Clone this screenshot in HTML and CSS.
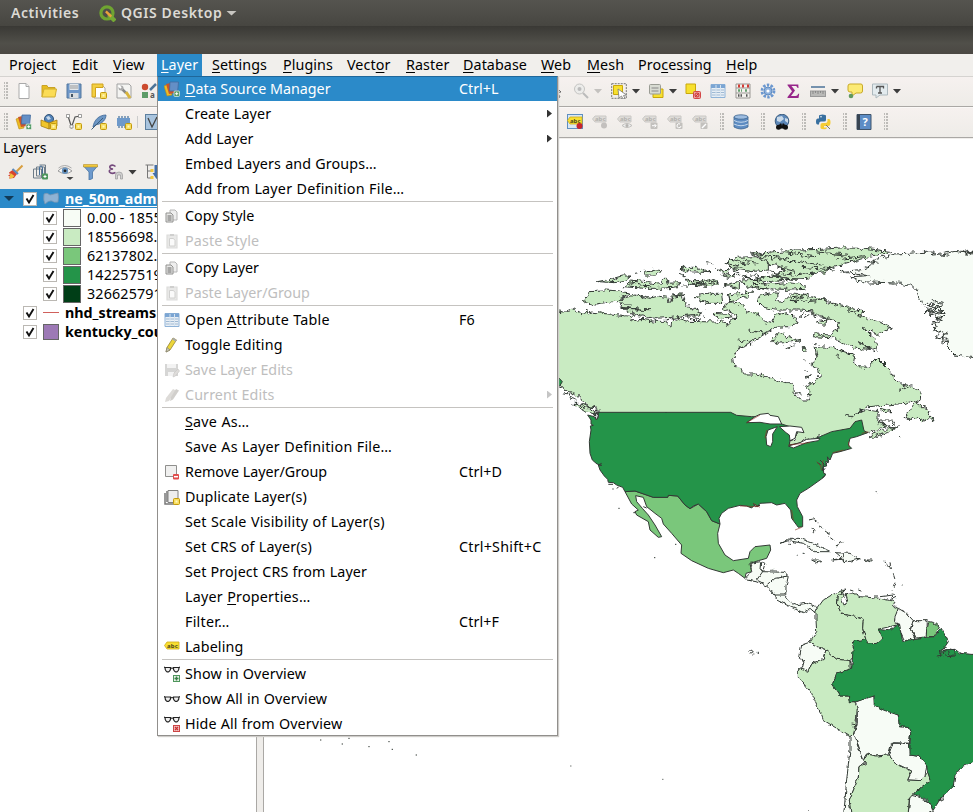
FILE: index.html
```html
<!DOCTYPE html>
<html lang="en">
<head>
<meta charset="utf-8">
<title>QGIS Desktop</title>
<link rel="stylesheet" href="styles.css">
</head>
<body>
<svg class="defs" width="0" height="0">
  <symbol id="new" viewBox="0 0 16 16"><path d="M3 .5h7l3 3v12H3z" fill="#fff" stroke="#aaa"/><path d="M10 .5v3h3" fill="#eee" stroke="#aaa"/></symbol>
  <symbol id="open" viewBox="0 0 16 16"><path d="M1 14V2.500h5l1 2h7V6" fill="#e8bd1e" stroke="#c9a227"/><path d="M1 14 3 6h12.500L14 14z" fill="#fbdc55" stroke="#d1ae30"/></symbol>
  <symbol id="save" viewBox="0 0 16 16"><path d="M1 1h14v14H1z" fill="#6f97c8" stroke="#55789f"/><path d="M3.500 1h9v6h-9z" fill="#e4e8ec"/><path d="M4 3h8M4 5h8" stroke="#999"/><path d="M3.500 10h9v5h-9z" fill="#d8dce0"/><path d="M5 11h2v3H5z" fill="#456"/></symbol>
  <symbol id="star" viewBox="0 0 16 16"><rect x="9.500" y="9.500" width="6" height="6" rx="1" fill="#f7dd60" stroke="#c49a0b"/><rect x="11.500" y="11.500" width="2" height="2" fill="#fff8c0"/></symbol>
  <symbol id="layout" viewBox="0 0 16 16"><path d="M3 3h9l2 2v10H3z" fill="#fff" stroke="#aaa"/><path d="M1 1h11v3.500H4.500v9.500H1z" fill="#f3cf42" stroke="#d1a31c"/><use href="#star"/></symbol>
  <symbol id="wrench" viewBox="0 0 16 16"><path d="M1 1h12l2 2v12H1z" fill="#f4f4f2" stroke="#a2a2a2"/><path d="M4 4 10 10" stroke="#888" stroke-width="2.500"/><path d="m10 9 4 6" stroke="#d9b53d" stroke-width="3"/><circle cx="5" cy="5" r="2.500" fill="#aaa"/><path d="m3 3 2 2" stroke="#fff" stroke-width="2"/></symbol>
  <symbol id="stylemgr" viewBox="0 0 16 16"><circle cx="4" cy="4" r="3.200" fill="#cc4a2e"/><path d="M1 9h6v6H1z" fill="#5d9c68"/><path d="m9 7 6-6" stroke="#4d7498" stroke-width="2.500"/><text x="9" y="15" class="glyph">a</text></symbol>
  <symbol id="datasrc" viewBox="0 0 16 16"><path d="m0 5 5-2 3 11-5 1z" fill="#edbb24" stroke="#b98d16" stroke-width=".6"/><path d="m2 3 5-1 4 10-6 1z" fill="#c9552d"/><path d="M6 1h8.500l-.8 9H5.500z" fill="#648fc6" stroke="#426b9e" stroke-width=".8"/><rect x="10" y="10" width="5.500" height="5.500" rx="1" fill="#539965" stroke="#e8f4e8" stroke-width=".7"/><path d="M12.700 11.200v3M11.200 12.700h3" stroke="#fff"/></symbol>
  <symbol id="geopkg" viewBox="0 0 16 16"><circle cx="8" cy="5" r="4.500" fill="#5382b8" stroke="#355577"/><path d="m5 3 3-1 2 3-3 1z" fill="#c6d8ea"/><path d="m0 6 8 3 8-3v6l-8 3-8-3z" fill="#f0c52c" stroke="#a37b13" stroke-width=".8"/><path d="M8 9v6" stroke="#a37b13"/><use href="#star"/></symbol>
  <symbol id="vector" viewBox="0 0 16 16"><path d="m2 2 3.500 11L9 3l5-1" fill="none" stroke="#555" stroke-width="1.200"/><path d="M.5.5h3v3h-3zM4 11h3v3H4zM12.500.5h3v3h-3z" fill="#fff" stroke="#777" stroke-width=".7"/><use href="#star"/></symbol>
  <symbol id="feather" viewBox="0 0 16 16"><path d="M2 13C3 6 8 1 15 1c0 4-3 9-11 10z" fill="#6c96c4" stroke="#3c6697" stroke-width=".8"/><path d="M.5 15.500 12 4" stroke="#3c5d7b"/><use href="#star"/></symbol>
  <symbol id="memory" viewBox="0 0 16 16"><path d="M3 2v12M6 2v12M9 2v12M12 2v12" stroke="#50779f" stroke-width="1.300"/><path d="M1 4h13v8H1z" fill="#6e99ca"/><use href="#star"/></symbol>
  <symbol id="virt" viewBox="0 0 16 16"><rect x=".5" y=".5" width="15" height="15" fill="#a9c4de" stroke="#5d7f9f"/><path d="m3 4 4 9 5-10" fill="none" stroke="#444" stroke-width="1.300"/></symbol>
  <symbol id="cursor" viewBox="0 0 16 16"><path d="m5 1 8 8-3.500.5L12 14l-2 1-2-4.500L5 13z" fill="#fff" stroke="#666"/></symbol>
  <symbol id="mag" viewBox="0 0 16 16"><circle cx="6.500" cy="6" r="5" fill="#ececea" stroke="#c4c4c2"/><circle cx="6.500" cy="6" r="2" fill="#bbb"/><path d="m10 10 5 5" stroke="#bbb" stroke-width="2"/></symbol>
  <symbol id="select" viewBox="0 0 16 16"><path d="M.7.700h14.600v14.600H.7z" fill="none" stroke="#777" stroke-dasharray="2 1"/><path d="M2.500 2.500h9v9h-9z" fill="#f7e02e" stroke="#c9a70c"/><path d="m7 6 8.500 6-3 .5 1.500 3-2 .5-1.500-3-2.500 2z" fill="#fff" stroke="#777" stroke-width=".8"/></symbol>
  <symbol id="selform" viewBox="0 0 16 16"><path d="M5 6h10v8.500H5z" fill="#f7e02e" stroke="#c9a70c"/><rect x="1.500" y="1.500" width="11" height="9.500" rx="1" fill="#d8dbd2" stroke="#9a9c94"/><path d="M3.500 5h7M3.500 8h7" stroke="#888" stroke-width="1.200"/></symbol>
  <symbol id="desel" viewBox="0 0 16 16"><path d="M1 1h9.500v9.500H1z" fill="#f7e02e" stroke="#c9a70c"/><rect x="8.500" y="8.500" width="7" height="7" rx="1" fill="#e9a19c" stroke="#d34747"/><circle cx="12" cy="12" r="2" fill="none" stroke="#cf3434"/><path d="m10 14 4-4" stroke="#cf3434"/></symbol>
  <symbol id="table" viewBox="0 0 16 16"><path d="M1 1.500h14v13H1z" fill="#e9eff5" stroke="#8fb3d8"/><path d="M1 1.500h14V5H1z" fill="#7ba5d3"/><path d="M2 7h12M2 9.500h12M2 12h12" stroke="#9fb9d3"/><path d="M6 2v12M10.500 2v12" stroke="#d7e4f0"/></symbol>
  <symbol id="abacus" viewBox="0 0 16 16"><path d="M1 1h14v14H1zM1 5h14M1 10h14" fill="#f4f2ee" stroke="#9a9794"/><path d="M3 3h2m2 0h2m3 0h2" stroke="#d33c35" stroke-width="3"/><path d="M3 7.500h4m3 0h3" stroke="#65a070" stroke-width="2.500" stroke-dasharray="2 1"/><path d="M3 12.500h5m3 0h2" stroke="#555" stroke-width="2.500" stroke-dasharray="1.500 1"/></symbol>
  <symbol id="gear" viewBox="0 0 16 16"><circle cx="8" cy="8" r="6" fill="none" stroke="#6b97cf" stroke-width="2.800" stroke-dasharray="2.400 1.370"/><circle cx="8" cy="8" r="4" fill="#8eb1dd" stroke="#5f8cc2"/><circle cx="8" cy="8" r="1.600" fill="#fff"/></symbol>
  <symbol id="sigma" viewBox="0 0 16 16"><path d="M2.500 1.500h10.800l.2 3.500h-1c-.4-1.500-1-2-2.500-2H6.500L10 7.500 6 13h4.500c1.500 0 2-.7 2.700-2.200h1l-.7 4.200h-11v-1L7 8.300l-4.500-6z" fill="#97268a"/></symbol>
  <symbol id="ruler" viewBox="0 0 16 16"><path d="M1 4h14" stroke="#4b7299" stroke-width="1.500"/><rect x=".5" y="8" width="15" height="5.500" fill="#b9b9b7" stroke="#999"/><path d="M3 8v3m2.500-3v2M8 8v3m2.500-3v2M13 8v3" stroke="#777" stroke-width=".7"/></symbol>
  <symbol id="tip" viewBox="0 0 16 16"><path d="M3 1h11q1.500 0 1.500 2v5q0 2-2 2H9l-4 3V9H3Q1 9 1 7V3q0-2 2-2z" fill="#fcea74" stroke="#c9aa28"/><circle cx="4" cy="13" r="2.300" fill="#60985e"/></symbol>
  <symbol id="annot" viewBox="0 0 16 16"><path d="M.5 1h15v11H8l-4 3v-3H.5z" fill="#e3ebee" stroke="#adb9be"/><path d="M4.500 3.500h7v2M8 3.500v7M6 10h4M4.500 3.500v2" fill="none" stroke="#555" stroke-width="1.300"/></symbol>
  <symbol id="tag" viewBox="0 0 16 16"><path d="M3 3h12v7H3L.5 6.500z" fill="#f8df32" stroke="#cfab18" stroke-width=".8"/><text x="3" y="8.700" class="abc">abc</text></symbol>
  <symbol id="tagon" viewBox="0 0 16 16"><rect x=".5" y=".5" width="15" height="14" fill="#d9e7f3" stroke="#5f8fc1"/><use href="#tag"/><circle cx="12.500" cy="12" r="3" fill="#c8242c"/></symbol>
  <symbol id="taggray" viewBox="0 0 16 16"><path d="M3 2h11v6H3L.5 5z" fill="#dedcd9" stroke="#cac8c5"/><text x="3" y="7.200" class="abc dim">abc</text></symbol>
  <symbol id="gdot" viewBox="0 0 16 16"><use href="#taggray"/><circle cx="12" cy="11.500" r="3" fill="#c3c0be"/></symbol>
  <symbol id="geye" viewBox="0 0 16 16"><use href="#taggray"/><path d="M5 11.500q5-4 10 0-5 4-10 0z" fill="#eee" stroke="#c0bebb"/><circle cx="10" cy="11.500" r="1.500" fill="#b5b3b0"/></symbol>
  <symbol id="gmove" viewBox="0 0 16 16"><use href="#taggray"/><rect x="8.500" y="8.500" width="7" height="6.500" rx="1" fill="#c3c1be"/><path d="M10 11.700h4m-1.500-1.700 1.700 1.700-1.700 1.700" fill="none" stroke="#fff"/></symbol>
  <symbol id="grot" viewBox="0 0 16 16"><use href="#taggray"/><rect x="8.500" y="8.500" width="7" height="6.500" rx="1" fill="#c3c1be"/><path d="M14 12a2 2 0 1 1-1-2" fill="none" stroke="#fff"/></symbol>
  <symbol id="gedit" viewBox="0 0 16 16"><use href="#taggray"/><rect x="8.500" y="8.500" width="7" height="6.500" rx="1" fill="#c3c1be"/><path d="m10 14 4-4" stroke="#fff" stroke-width="1.500"/></symbol>
  <symbol id="db" viewBox="0 0 16 16"><path d="M1 3v10q7 4 14 0V3z" fill="#5e8cc2" stroke="#3e658f" stroke-width=".8"/><ellipse cx="8" cy="3" rx="7" ry="2.200" fill="#9dbce0" stroke="#3e658f" stroke-width=".8"/><path d="M1 6.500q7 3.500 14 0M1 10q7 3.500 14 0" fill="none" stroke="#c5d8ec"/></symbol>
  <symbol id="globe" viewBox="0 0 16 16"><circle cx="8" cy="7" r="6.800" fill="#5c87b8" stroke="#3f5f80"/><path d="m3 3 5-1 2 3-4 3-3-1zm8 1 3 1v4l-3-2z" fill="#c9d9e9"/><path d="M3 14.500 6 9.500h1.500L8 12l.5-2.500H10l3 5" fill="#111"/><circle cx="4.500" cy="13.300" r="2.500" fill="#111"/><circle cx="11.500" cy="13.300" r="2.500" fill="#111"/></symbol>
  <symbol id="python" viewBox="0 0 16 16"><path d="M4 5V2q0-1.500 3.500-1.500T11 2v4q0 1.500-2 1.500H6q-2 0-2 3H2.500Q1 10.500 1 7.500T3 4.500h5" fill="#386f9f"/><path d="M5.500 14v-3q0-2 2-2h3q2 0 2-2V5H14q1.500 0 1.500 3.500T13 12H9v1.500h3q0 1.800-3 1.800t-3.500-1.300" fill="#f5cc35"/><circle cx="6" cy="2.700" r=".8" fill="#fff"/><path d="m11 11 4 4" stroke="#777"/></symbol>
  <symbol id="help" viewBox="0 0 16 16"><path d="M1 .5h14v15H1z" fill="#5d8cc5" stroke="#40546b"/><path d="M1 .5h3v15H1z" fill="#384452"/><text x="6.500" y="12" class="q">?</text></symbol>
  <symbol id="brush" viewBox="0 0 16 16"><path d="m15 1.500-6 6" stroke="#d89e3e" stroke-width="2"/><path d="m5 6 4.500 4-3 4-5 .5 1-2-2-1 2-1-1-2z" fill="#d8442e"/><path d="m3 9 4 3-2 2-3 .5z" fill="#efc13c"/><path d="m5 5 5.500 5" stroke="#5b88ba" stroke-width="2"/></symbol>
  <symbol id="group" viewBox="0 0 16 16"><path d="M1 5h8v9H1zM4 3h8v9H4zM7 1h6v10" fill="none" stroke="#6e7c88"/><path d="M7 11V4q0-2 1.500-2T10 4v6" fill="none" stroke="#456d96"/><rect x="9.500" y="9.500" width="6" height="6" rx="1" fill="#4e965c"/><path d="M12.500 11v3M11 12.500h3" stroke="#fff"/></symbol>
  <symbol id="eye" viewBox="0 0 16 16"><path d="M.5 7q6-7 14 0Q8 12 .5 7z" fill="#fff" stroke="#999"/><circle cx="7.500" cy="6.800" r="3.200" fill="#6894c0"/><circle cx="7.500" cy="6.800" r="1.400" fill="#222"/><path d="M1 4q6-5 13 0" fill="none" stroke="#aaa"/><path d="M9 13h7l-3.500 3z" fill="#444"/></symbol>
  <symbol id="funnel" viewBox="0 0 16 16"><path d="M1 2h14l-5 6v6.500L6.500 16V8z" fill="#6d9acd" stroke="#4774a2" stroke-width=".8"/><path d="M1 .5h14V3H1z" fill="#f0c93c" stroke="#b7902c" stroke-width=".6"/></symbol>
  <symbol id="eps" viewBox="0 0 16 16"><path d="M8 2.500Q5 0 2.500 2.200 1.500 4.500 5.500 5 1 5.500 2 8q2 2.500 6 .5" fill="none" stroke="#754b7d" stroke-width="1.600"/><path d="M8 15v-4q0-3 3.500-3t3.500 3v4h-2v-4h-3v4z" fill="#d0d0d0" stroke="#999" stroke-width=".7"/></symbol>
  <symbol id="expand" viewBox="0 0 16 16"><path d="M1 1h8M3 1v13h4M3 7h4" fill="none" stroke="#777"/><path d="M6 5h3v3H6zM6 12h3v3H6z" fill="#f2c83b"/><path d="M10 1h4v8h2l-4 6-4-6h2z" fill="#426fa8"/></symbol>
  <symbol id="copy" viewBox="0 0 16 16"><path d="M6 2h5l2 2v8H6z" fill="#eee" stroke="#b6b6b6"/><path d="M2 5h5l2 2v7H2z" fill="#e6e6e5" stroke="#929290"/><path d="M3.500 8h4M3.500 10h4M3.500 12h4" stroke="#666" stroke-width="1.200"/></symbol>
  <symbol id="paste" viewBox="0 0 16 16"><path d="M3 2h10v13H3z" fill="#e8e8e7" stroke="#dcdcdb" stroke-width="1.200"/><path d="M5.500 5.500h4l1.500 2V13H5.500z" fill="#fafafa" stroke="#d0d0cf"/><path d="M6 1h4v2H6z" fill="#cfcfce"/></symbol>
  <symbol id="pencil" viewBox="0 0 16 16"><path d="m2 15 1-4.500L9 1l3.500 2L6 13z" fill="#ecd63a" stroke="#958434" stroke-width=".8"/><path d="m8.500 1.500 3.800 2.300" stroke="#aaa" stroke-width="2"/><path d="m2 15 1-4.500L6 13z" fill="#ccc9b0" stroke="#777" stroke-width=".6"/></symbol>
  <symbol id="savegray" viewBox="0 0 16 16"><path d="M1 2h13v12H1z" fill="#d6d6d5"/><path d="M3 2h9v4H3zM4 10h6v4H4z" fill="#f3f3f3"/><path d="m9 15 1-4 4-4 1.500 2-4 5z" fill="#dedcda" stroke="#c8c6c5" stroke-width=".6"/></symbol>
  <symbol id="editsgray" viewBox="0 0 16 16"><path d="m1 15 1-4L9 2l3 1.500L5 14z" fill="#dddbd8"/><path d="m6 14 1-4 5-8 3 1.500-6 9z" fill="#d1cfcc"/></symbol>
  <symbol id="remove" viewBox="0 0 16 16"><path d="M1.500 1.500h11v11h-11z" fill="#f0f0ef" stroke="#8f8f8d"/><rect x="9" y="10" width="6" height="5.500" rx="1" fill="#e04c4c"/><path d="M10 12.700h4" stroke="#fff" stroke-width="1.500"/></symbol>
  <symbol id="dup" viewBox="0 0 16 16"><path d="M1 4v11h10M3 2v11" fill="none" stroke="#777" stroke-width="1.500"/><path d="M4 1.500h10v12H4z" fill="#eee" stroke="#828280"/><use href="#star"/></symbol>
  <symbol id="glasses" viewBox="0 0 16 16"><g fill="#eee" stroke="#222" stroke-width="1.200"><path d="M1 6h5.500v2Q5 11.500 2.500 10 1 9 1 6z"/><path d="M9.500 6H15q0 3-1.500 4-2.500 1.500-4-2zM6.500 7q1.500-1 3 0M1 6 0 5.500M15 6l1-.5"/></g></symbol>
  <symbol id="showov" viewBox="0 0 16 16"><use href="#glasses" y="-4.500"/><rect x="9.500" y="9.500" width="6" height="6" fill="#e9f3e9" stroke="#4e965c"/><path d="M12.500 10.500v4m-2-2h4" stroke="#3c8049" stroke-width="1.500"/></symbol>
  <symbol id="hideov" viewBox="0 0 16 16"><use href="#glasses" y="-4.500"/><rect x="9.500" y="9.500" width="6" height="6" fill="#f1bcbc" stroke="#cc4545"/><path d="m11 11 3 3m0-3-3 3" stroke="#c33" stroke-width="1.200"/></symbol>
  <symbol id="poly" viewBox="0 0 16 16"><path d="M1 3q3-2 6 1 4-1 8-2 1 4 0 9-4 1-6-1-3-1-7 3Q0 9 1 3z" fill="#8fb3d4" stroke="#7796b2" stroke-width=".8"/></symbol>
  <symbol id="check" viewBox="0 0 12 12"><path d="m2.500 5.500 2.500 4L9.500 2" fill="none" stroke="#111" stroke-width="1.900"/></symbol>
  <symbol id="qgis" viewBox="0 0 16 16"><circle cx="7.500" cy="7.500" r="5.700" fill="none" stroke="#6fa431" stroke-width="3"/><path d="m9 9 6 6" stroke="#75a935" stroke-width="4"/><path d="m6.500 6 5 5" stroke="#eba23b" stroke-width="2.300"/></symbol>
</svg>

<header class="shell"><span class="activities">Activities</span><svg class="logo"><use href="#qgis"/></svg><span class="app">QGIS Desktop</span><i class="caret light"></i></header>
<div class="titlebar"></div>
<nav class="menubar">
  <span class="m1">Pro<u>j</u>ect</span><span class="m2"><u>E</u>dit</span><span class="m3"><u>V</u>iew</span><span class="m4 active"><u>L</u>ayer</span><span class="m5"><u>S</u>ettings</span><span class="m6"><u>P</u>lugins</span><span class="m7">Vect<u>o</u>r</span><span class="m8"><u>R</u>aster</span><span class="m9"><u>D</u>atabase</span><span class="m10"><u>W</u>eb</span><span class="m11"><u>M</u>esh</span><span class="m12">Pro<u>c</u>essing</span><span class="m13"><u>H</u>elp</span>
</nav>
<div class="toolbar">
  <b class="grip first"></b>
  <svg><use href="#new"/></svg><svg><use href="#open"/></svg><svg><use href="#save"/></svg><svg><use href="#layout"/></svg><svg><use href="#wrench"/></svg><svg><use href="#stylemgr"/></svg>
  <div class="right one"><svg><use href="#cursor"/></svg><svg><use href="#mag"/></svg><i class="caret faint"></i><svg><use href="#select"/></svg><i class="caret"></i><svg><use href="#selform"/></svg><i class="caret"></i><svg><use href="#desel"/></svg><svg><use href="#table"/></svg><svg><use href="#abacus"/></svg><svg><use href="#gear"/></svg><svg><use href="#sigma"/></svg><svg><use href="#ruler"/></svg><i class="caret"></i><svg><use href="#tip"/></svg><svg><use href="#annot"/></svg><i class="caret"></i></div>
</div>
<div class="toolbar second">
  <b class="grip first"></b>
  <svg><use href="#datasrc"/></svg><svg><use href="#geopkg"/></svg><svg><use href="#vector"/></svg><svg><use href="#feather"/></svg><svg><use href="#memory"/></svg><b class="rule"></b><svg><use href="#virt"/></svg>
  <div class="right two"><svg><use href="#tagon"/></svg><svg><use href="#gdot"/></svg><svg><use href="#geye"/></svg><svg><use href="#gmove"/></svg><svg><use href="#grot"/></svg><svg><use href="#gedit"/></svg><b class="grip"></b><svg><use href="#db"/></svg><b class="grip"></b><svg><use href="#globe"/></svg><b class="grip"></b><svg><use href="#python"/></svg><b class="grip"></b><svg><use href="#help"/></svg><b class="grip"></b></div>
</div>
<main class="work">
  <aside class="layers">
    <div class="title">Layers</div>
    <div class="tools"><svg><use href="#brush"/></svg><svg><use href="#group"/></svg><svg><use href="#eye"/></svg><svg><use href="#funnel"/></svg><svg><use href="#eps"/></svg><i class="caret"></i><svg><use href="#expand"/></svg></div>
    <div class="tree">
      <div class="row sel"><i class="twist"></i><svg class="box"><use href="#check"/></svg><svg class="kind"><use href="#poly"/></svg><span class="name"><u>ne_50m_admin</u></span></div>
      <div class="row child"><svg class="box"><use href="#check"/></svg><i class="sw c1"></i><span>0.00 - 18556698</span></div>
      <div class="row child"><svg class="box"><use href="#check"/></svg><i class="sw c2"></i><span>18556698.00</span></div>
      <div class="row child"><svg class="box"><use href="#check"/></svg><i class="sw c3"></i><span>62137802.00</span></div>
      <div class="row child"><svg class="box"><use href="#check"/></svg><i class="sw c4"></i><span>142257519.00</span></div>
      <div class="row child"><svg class="box"><use href="#check"/></svg><i class="sw c5"></i><span>326625791.00</span></div>
      <div class="row top"><svg class="box"><use href="#check"/></svg><i class="line"></i><span class="name">nhd_streams</span></div>
      <div class="row top"><svg class="box"><use href="#check"/></svg><i class="sw c6"></i><span class="name">kentucky_counties</span></div>
    </div>
  </aside>
  <div class="splitter"></div>
  <section class="canvas">
    <svg class="map" viewBox="-873 -303 2127 2019">
      <filter id="coast" x="-5%" y="-5%" width="110%" height="110%"><feTurbulence type="fractalNoise" baseFrequency=".07" numOctaves="2" seed="4"/><feDisplacementMap in="SourceGraphic" scale="22" xChannelSelector="R" yChannelSelector="G"/></filter>
      <filter id="shore" x="-5%" y="-5%" width="110%" height="110%"><feTurbulence type="fractalNoise" baseFrequency=".07" numOctaves="2" seed="9"/><feDisplacementMap in="SourceGraphic" scale="12" xChannelSelector="R" yChannelSelector="G"/></filter>
      <g class="land" filter="url(#coast)">
        <path class="l" d="M-60 213H10L30 216 48 212 58 206 66 212 85 222 94 212 100 222 108 216 165 222 235 230 230 243 262 238 300 244 330 244 340 254 348 262 350 244 375 236 400 244 480 246 500 240 515 256 525 240 540 238 548 225 520 215 508 205 515 190 535 185 560 195 575 212 600 222 615 228 630 245 650 250 660 225 700 218 725 235 720 255 700 260 660 262 600 298 585 312 550 325 533 355 535 375 545 378 560 385 565 402 600 402 640 412 680 425 712 430 715 455 735 480 760 480 765 455 750 440 770 430 795 410 790 385 770 375 785 350 780 320 830 322 870 335 900 345 895 370 910 380 940 382 967 352 1000 385 1015 410 1040 432 1075 440 1095 455 1092 478 1050 490 1000 495 940 500 900 520 940 510 970 515 968 545 995 560 935 580 890 570 750 600 710 622 700 610 718 600 725 580 700 565 675 550 580 545 527 527 130 527 128 505 100 500 80 480 60 460 30 452 10 430-60 400z"/>
        <path class="l" d="M605 185 615 165 650 158 675 160 660 175 680 190 710 162 750 165 800 180 845 195 900 205 930 215 915 225 940 235 980 248 1012 262 985 275 970 285 925 265 945 285 965 300 968 320 950 330 910 305 945 328 900 325 860 305 830 293 775 290 780 282 830 285 840 270 855 250 830 240 800 228 765 212 730 210 660 210 620 200z"/>
        <path class="l" d="M590 42 660 35 720 30 800 28 860 24 930 25 1013 35 950 48 900 62 840 78 810 95 770 100 760 115 710 118 660 105 690 90 660 75 620 70 590 62 620 52z"/>
        <path class="l" d="M590 130 640 132 700 128 750 135 753 145 690 148 610 145zM560 110 600 118 650 105 700 120 640 125zM510 70 545 52 600 50 640 65 640 90 590 95 530 85zM555 120 620 118 640 150 580 140zM520 165 595 155 575 170 525 185zM375 82 420 82 468 98 400 95zM392 120 430 128 470 118 492 130 470 140 405 135zM420 170 470 160 500 160 503 190 450 190zM480 90 525 92 515 100zM500 105 550 103 520 112zM505 135 550 125 550 145zM475 220 510 222 535 230 490 236z"/>
        <path class="l" d="M130 125 165 118 200 108 228 108 215 120 180 128zM205 140 230 120 270 125 290 130 315 132 320 115 335 115 340 130 375 128 370 140 320 145 270 145zM265 95 290 88 320 92 300 105 270 105zM85 185 105 152 145 150 185 152 228 160 190 178 160 190 120 195zM185 180 240 165 285 175 310 168 335 172 345 188 355 168 380 165 395 200 440 215 430 228 380 228 350 232 300 235 240 225 200 205 280 210 200 202zM355 162 390 162 375 168zM50 490 70 490 100 500 128 525 90 515z"/>
        <path class="l" d="M650 305 670 275 690 285 735 303 710 305 670 310zM690 322 715 318 705 326zM785 245 815 240 810 252 790 252zM1050 535 1085 483 1090 500 1110 500 1125 510 1122 525 1138 540 1120 536 1100 545 1090 535zM940 590 965 575 1030 560 1000 578 950 592zM975 505 1010 512 985 515zM742 325l12 0-3 9-9-2z"/>
        <path class="n" d="M1020 42 1090 38 1130 36 1135 45 1160 42 1200 34 1230 38 1280 35V355L1230 350 1200 345 1175 320 1180 300 1155 290 1175 280 1140 270 1150 260 1130 250 1165 240 1125 225 1170 215 1110 215 1160 200 1120 200 1140 190 1100 190 1090 160 1070 138 1040 130 1000 128 920 125 890 110 940 107 852 95 930 88 950 72 970 70 940 65z"/>
        <path class="ink" d="M520 58 570 72M510 70 550 78M530 82 570 80M560 63 610 70M610 48 690 58M650 45 720 65M690 38 780 50M700 60 800 75M660 80 720 94M740 82 840 90M720 105 790 98M780 35 880 46M840 60 930 50M640 95 710 105M610 110 680 108M660 112 740 118M215 130 240 128 220 137M245 133 290 139M400 122 455 133 410 133M460 125 485 132M195 192 230 192M210 208 285 212M580 270 635 282M545 300 590 306M380 228 440 220M335 240 375 230M405 235 435 240M630 40 605 43M700 175 760 165 710 182 760 180M760 185 820 178M820 180 845 200M870 200 880 210 890 203 900 218 910 205 930 225M880 215 920 230M910 310 945 325M725 240 760 213 790 230 830 235M750 230 760 223M770 220 780 235M1030 452 1075 437M975 540 1010 540 1020 555 990 560zM965 550 1020 565M870 525 890 530 930 505M1130 180 1165 190 1150 205 1170 225 1140 235 1165 242M1130 250 1145 260 1135 275 1155 270 1145 295 1165 285 1160 310 1180 295M1110 200 1130 220 1150 195M1160 42 1180 46M1220 30 1254 38M1215 36 1254 42M10 440 35 450 25 460 50 462 45 474 65 480M60 488 90 505 115 500 128 520 110 520 130 535M240 100 252 98M370 103 390 108M455 68 472 72M385 138 400 138M430 180 460 185M585 105 605 106M510 250 520 257M450 205l4 3M448 225l5 3M530 88 550 95M750 410 765 408 752 415zM720 455 740 465M845 345 852 352M965 330 970 336M745 362l5 2M748 392l4 3M775 310l14 2"/>
      </g>
      <g class="land">
        <path class="d" d="M-60 385 10 412 22 425 14 438-60 410z"/>
        <path class="m" d="M210 755 240 753 295 772H338L340 766 368 768 390 795 405 806 430 792 455 815 470 842 495 852 488 880 490 910 510 945 535 962 580 955 585 935 600 920 645 915 647 930 635 955 610 962 585 970 590 995 573 1000 570 1015 550 1000 535 990 505 998 460 985 410 962 378 940 380 915 350 880 325 852 320 835 300 820 275 800 265 772 242 767 245 785 262 805 280 825 300 855 320 890 310 892 285 870 280 845 245 825 240 815 250 810 230 792z"/>
        <path class="d" d="M130 517H527L545 526 590 530 635 530 680 552 720 565 705 600 703 615 755 605 795 590 830 575 885 565 900 545 920 540 927 572 938 578 905 590 885 595 880 615 890 625 855 635 833 640 825 660 818 652 820 668 812 664 815 678 805 680 806 700 812 702 806 712 795 720 760 745 735 760 725 780 727 800 743 830 743 860 730 862 710 835 707 810 690 790 665 795 650 788 615 790 608 800 600 794 590 804 575 798 555 796 520 805 500 820 492 835 495 852 470 842 455 815 430 792 415 798 405 806 390 795 368 768 340 766 338 772H295L240 753 210 755 203 742 185 735 175 728 160 727 158 718 148 708 135 690 130 675 140 676 126 672 112 660 105 640 103 605 108 570 106 558 115 556 108 552 108 540 98 525 118 530 124 540 130 532z"/>
        <g transform="translate(555 510)">
          <path class="w" d="M20 38 45 20 60 13 85 10 90 16 115 20 125 42 90 42 60 37zM80 105 78 80 84 60 112 50 98 72 98 95 92 110zM118 50 150 48 185 52 192 68 170 65 165 85 150 92 148 75 138 68zM145 108 180 98 200 88 240 85 235 92 200 98 160 114z"/>
        </g>
        <g transform="translate(555 510)" filter="url(#shore)">
          <path class="n" d="M15 505 35 485 30 460 62 455 60 478 68 485 135 487 145 498 138 530 137 560 145 570 165 585 200 580 230 590 225 608 210 595 190 608 150 590 110 570 105 555 80 528 60 520 48 515 20 510zM120 400 150 385 180 385 220 400 272 425 225 425 190 400 145 392zM275 450 305 445 285 428 330 430 358 447 312 458 308 448zM215 450 235 450 245 455 230 458zM375 450 400 450 395 457z"/>
          <path class="ink" d="M62 455 75 460 68 485 50 510 70 520M80 528 105 505 145 498M105 555H135M310 430 310 455M205 330 220 327 232 335M215 355l10 5-3 10M240 345l5 10M255 360 270 370M290 410 300 395 310 400M170 435h4M188 430h6M410 248h3M480 80h3M435 455l5 12 10 3M450 460l5 20M460 490l5 15M465 515l-5 15M485 525h3M402 558h12M420 560l40-5-8 15 16-8M455 540h3M330 540l10 3M355 540l8 3M265 378l15 12M145 403h8M95 480l10-2"/>
        </g>
        <g transform="translate(555 510)">
          <path class="ink" d="M247 203l10-8M240 150l12 12-6 20 10-6M262 140l4 14-10 10M232 158l10 6M40 280l6 10 14-4"/>
          <path class="red" d="M230 155 240 165 245 180M250 150 245 170M0 288 55 290M165 360 185 352M155 300 160 330M385 65 365 70M325 95 328 112M310 120 278 128M40 280 60 292M20 38 60 15M80 60 75 85M145 105 210 98"/>
        </g>
        <g transform="translate(555 1050)" filter="url(#shore)">
          <path class="l" d="M228 60 250 30 275 15 310 0 295 20 292 45 305 72 340 78 370 88 368 115 378 150 340 155 340 200 330 212 290 208 255 178 230 170 208 157 230 125 228 90z"/>
          <path class="l" d="M318-4 308 8 312 18 305 30 312 45 322 38 315 12 335 8 360 20 420 25 465 35 460 50 475 55 465 90 470 105 415 118 428 145 410 160 385 162 378 150 368 115 370 88 340 78 305 72 292 45 295 20z"/>
          <path class="n" d="M475 55 500 70 520 92 512 115 525 145 495 157 480 125 478 102 463 98 465 80zM520 92 562 92 560 140 525 145 512 115zM208 157 235 170 258 180 250 205 215 222 205 245 185 238 192 212 178 205 185 165z"/>
          <path class="m" d="M566 95 580 97 598 112 582 140 558 140 560 120z"/>
          <path class="l" d="M175 235 205 245 215 222 250 205 258 180 290 208 330 212 335 235 290 250 278 285 300 318 325 318 328 335 345 335 352 355 348 400 340 435 330 440 250 390 240 365 215 310 175 262z"/>
          <path class="n" d="M345 335 402 318 403 345 475 375 478 410 505 412 512 430 508 460 460 458 445 495 410 498 380 492 370 508 355 470 342 430 352 400 352 355zM445 495 455 460 508 460 512 495 540 500 560 525 555 560 545 572 503 570 515 543 470 522zM330 440 342 430 370 508 375 515 357 530 355 565 328 630 335 690H310L320 570 330 480zM510 615 540 622 572 640 580 665 503 690z"/>
          <path class="l" d="M370 508 380 492 410 498 445 495 470 522 515 543 503 570 545 572 565 548 570 570 520 612 508 625 503 690H335L328 630 355 565 357 530 377 520z"/>
          <path class="d" d="M478 102 482 125 488 155 525 145 582 140 604 115 625 155 615 170 600 188 620 176 648 180 660 190 720 195V510L665 530 645 555 640 590 605 620 580 660 572 640 550 622 520 612 540 595 570 570 562 545 560 525 540 500 510 495 510 465 512 430 505 412 478 410 475 375 430 360 403 345 402 318 385 322 350 335 328 335 325 318 300 318 278 285 290 250 335 235 340 170 335 155 370 148 378 150 385 162 410 160 428 145 415 118 445 122z"/>
          <path class="ink" d="M610 180 645 178 645 198 620 200zM590 198 610 195M598 183 605 200M625 180 632 205M597 632 612 615 608 630zM335 402 352 405 340 412 350 418M330 212v25M22 185l10-6 8 6-8 5M40 192h3M53 187h4M205 662h4"/>
        </g>
        <path class="ink" d="M160 733h14M185 745l6-4M172 747h4M190 805h4M360 913h4M297 953h4M235 818h5M130 675l10-5M265 800l10 4M-705 1500h4M-620 1495h4M-640 1512h4M-560 1520h4M-490 1528h4M-500 1505h4M-418 1545h4M46 1578h3M322 1618h3"/>
      </g>
    </svg>
  </section>
</main>

<div class="menu">
  <div class="item on"><svg><use href="#datasrc"/></svg><span><u>D</u>ata Source Manager</span><kbd>Ctrl+L</kbd></div>
  <div class="item"><span>Create Layer</span><i class="sub"></i></div>
  <div class="item"><span>Add Layer</span><i class="sub"></i></div>
  <div class="item"><span>Embed Layers and Groups…</span></div>
  <div class="item"><span class="wide">Add from Layer Definition File…</span></div>
  <hr>
  <div class="item"><svg><use href="#copy"/></svg><span class="tight">Copy Style</span></div>
  <div class="item off"><svg><use href="#paste"/></svg><span>Paste Style</span></div>
  <hr>
  <div class="item"><svg><use href="#copy"/></svg><span class="tight">Copy Layer</span></div>
  <div class="item off"><svg><use href="#paste"/></svg><span class="tight">Paste Layer/Group</span></div>
  <hr>
  <div class="item"><svg><use href="#table"/></svg><span class="wide">Open <u>A</u>ttribute Table</span><kbd>F6</kbd></div>
  <div class="item"><svg><use href="#pencil"/></svg><span>Toggle Editing</span></div>
  <div class="item off"><svg><use href="#savegray"/></svg><span class="tight">Save Layer Edits</span></div>
  <div class="item off"><svg><use href="#editsgray"/></svg><span>Current Edits</span><i class="sub"></i></div>
  <hr>
  <div class="item"><span class="wide"><u>S</u>ave As…</span></div>
  <div class="item"><span class="wide">Save As Layer Definition File…</span></div>
  <div class="item"><svg><use href="#remove"/></svg><span class="tight">Remove Layer/Group</span><kbd>Ctrl+D</kbd></div>
  <div class="item"><svg><use href="#dup"/></svg><span>Duplicate Layer(s)</span></div>
  <div class="item"><span class="wide">Set Scale Visibility of Layer(s)</span></div>
  <div class="item"><span>Set CRS of Layer(s)</span><kbd class="wide">Ctrl+Shift+C</kbd></div>
  <div class="item"><span>Set Project CRS from Layer</span></div>
  <div class="item"><span class="wide">Layer <u>P</u>roperties…</span></div>
  <div class="item"><span class="wide">Filter…</span><kbd>Ctrl+F</kbd></div>
  <div class="item"><svg><use href="#tag"/></svg><span>Labeling</span></div>
  <hr>
  <div class="item"><svg><use href="#showov"/></svg><span>Show in Overview</span></div>
  <div class="item"><svg><use href="#glasses"/></svg><span>Show All in Overview</span></div>
  <div class="item"><svg><use href="#hideov"/></svg><span>Hide All from Overview</span></div>
</div>
</body>
</html>
```
FILE: styles.css
```css
* { box-sizing: border-box; }
body { margin: 0; width: 973px; height: 812px; overflow: hidden; display: flex; flex-direction: column; position: relative; background: #f0eeeb; color: #000; font: 14.3px/20px "Noto Sans", "Open Sans", sans-serif; }
.defs { display: none; }
u { text-decoration: underline; text-decoration-thickness: 1px; text-underline-offset: 2px; }
i, b { display: block; flex: none; }
svg { flex: none; }
.glyph { font: bold 8px "Noto Sans", sans-serif; fill: #555; }
.abc { font: bold 6px "Noto Sans", sans-serif; fill: #4c451a; }
.abc.dim { fill: #b3b1ae; }
.q { font: bold 11px "Noto Sans", sans-serif; fill: #fff; }

.shell { height: 26px; flex: none; display: flex; align-items: center; padding-left: 11px; background: linear-gradient(#55544f, #474641); color: #dcdad5; font-weight: 600; font-size: 14px; letter-spacing: .58px; }
.activities { width: 88px; }
.logo { width: 17px; height: 17px; margin-right: 5px; }
.app { width: 105px; white-space: nowrap; }
.caret { width: 12px; height: 5px; background: #3c3c3c; clip-path: polygon(0 0, 9px 0, 4.5px 5px); }
.caret.light { background: #c8c6c1; clip-path: polygon(0 0, 11px 0, 5.5px 5px); }
.caret.faint { background: #c4c2bf; width: 13px; }
.titlebar { height: 28px; flex: none; background: linear-gradient(#3b3a36, #504f49 60%, #4b4843); border-top: 1px solid #3a3935; }

.menubar { height: 22px; flex: none; display: flex; padding-left: 4px; background: #f1efec; line-height: 22px; letter-spacing: .08px; }
.menubar span { padding-left: 5px; white-space: nowrap; }
.menubar .active { background: #2b8ac9; color: #fff; padding-left: 4px; }
.m1 { width: 63px; } .m2 { width: 41px; } .m3 { width: 49px; } .m4 { width: 45px; margin-right: 5px; }
.m5 { width: 71px; } .m6 { width: 64px; } .m7 { width: 59px; } .m8 { width: 57px; } .m9 { width: 78px; }
.m10 { width: 46px; } .m11 { width: 51px; } .m12 { width: 88px; } .m13 { width: 50px; }

.toolbar { height: 31px; flex: none; display: flex; align-items: center; border-top: 1px solid #d5d3d0; border-bottom: 1px solid #aaa8a5; padding-bottom: 1px; background: linear-gradient(#f6f1ef, #eeece8); }
.toolbar.second { border-top-color: #faf8f6; margin-bottom: 1px; }
.toolbar svg { width: 25px; height: 16px; padding-right: 1px; }
.right { display: flex; align-items: center; }
.right.one { margin-left: 382px; }
.right.two { margin-left: 397px; }
.grip { width: 16px; height: 18px; background: radial-gradient(circle at 1px 1px, #bdbbb8 .8px, transparent 1px) 0 0 / 3px 3px; background-clip: content-box; padding: 0 4px 0 7px; }
.grip.first { width: 11.5px; padding: 0 3px 0 4px; }
.rule { width: 4px; height: 12px; border-left: 1px solid #ccc; }

.work { flex: 1; display: flex; min-height: 0; }
.layers { width: 256px; display: flex; flex-direction: column; background: #efedea; }
.title { height: 18px; line-height: 18px; padding-left: 3px; }
.tools { height: 32px; display: flex; align-items: center; padding: 0 0 2px 3px; }
.tools svg { width: 25px; height: 16px; }
.tree { flex: 1; background: #fff; }
.row { height: 19px; display: flex; align-items: center; line-height: 19px; white-space: nowrap; }
.row.sel { background: #2b8ac9; color: #fff; }
.twist { width: 10px; height: 5px; margin: 0 9px 0 4px; background: #123a57; clip-path: polygon(0 0, 10px 0, 5px 5px); }
.box { width: 14px; height: 14px; background: #fff; border: 1px solid #bbb8b3; }
.kind { width: 16px; height: 16px; margin: 0 6px; }
.name { font-weight: 700; }
.child { padding-left: 43px; }
.top { padding-left: 23px; }
.child .sw { width: 18px; height: 18px; margin: 0 6px; border: 1px solid #666; }
.child span { letter-spacing: .15px; }
.top .sw, .line { width: 16px; height: 16px; margin: 0 6px; border: 1px solid #666; }
.top .line { height: 1px; border: 0; background: #d0605c; }
.c1 { background: #f7fcf5; } .c2 { background: #c9ebc2; } .c3 { background: #7ac77b; } .c4 { background: #249449; } .c5 { background: #003e17; } .c6 { background: #9d79b6; }
.splitter { width: 8px; background: #efedea; border: solid #aaa8a5; border-width: 0 1px; }
.canvas { flex: 1; background: #fff; }
.map { display: block; width: 709px; height: 673px; }
.land path { stroke: #333a35; stroke-width: 3; stroke-linejoin: round; }
.land .l { fill: #c9ebc2; } .land .n { fill: #f7fcf6; } .land .m { fill: #7ac77b; } .land .d { fill: #249449; } .land .w { fill: #fff; }
.land .ink { fill: none; }
.land .red { fill: none; stroke: #8e3026; stroke-width: 1.8; }

.menu { position: absolute; left: 157px; top: 76px; width: 401px; height: 660px; background: #fff; border: 1px solid #918f8c; border-top-color: #1f679a; box-shadow: 1px 1px 1px #cfcdca; }
.menu hr { margin: 0 4px; height: 2px; border: 0; border-top: 1px solid #c5c3c0; }
.item { height: 25px; line-height: 24px; display: grid; grid-template-columns: 27px 274px 1fr 10px; align-items: center; white-space: nowrap; letter-spacing: .12px; word-spacing: .3px; }
.item svg { grid-column: 1; grid-row: 1; width: 16px; height: 16px; margin-left: 6px; }
.item span { grid-column: 2; grid-row: 1; }
.item kbd { grid-column: 3; grid-row: 1; font: inherit; }
.item .wide { letter-spacing: .23px; }
.item .tight { letter-spacing: 0; word-spacing: 0; }
.item.on { background: #2b8ac9; color: #fff; height: 24px; letter-spacing: 0; word-spacing: 0; }
.item.off { color: #bebebe; }
.sub { grid-column: 4; grid-row: 1; width: 5px; height: 8px; background: #333; clip-path: polygon(0 0, 5px 4px, 0 8px); }
.off .sub { background: #c5c5c5; }
```
